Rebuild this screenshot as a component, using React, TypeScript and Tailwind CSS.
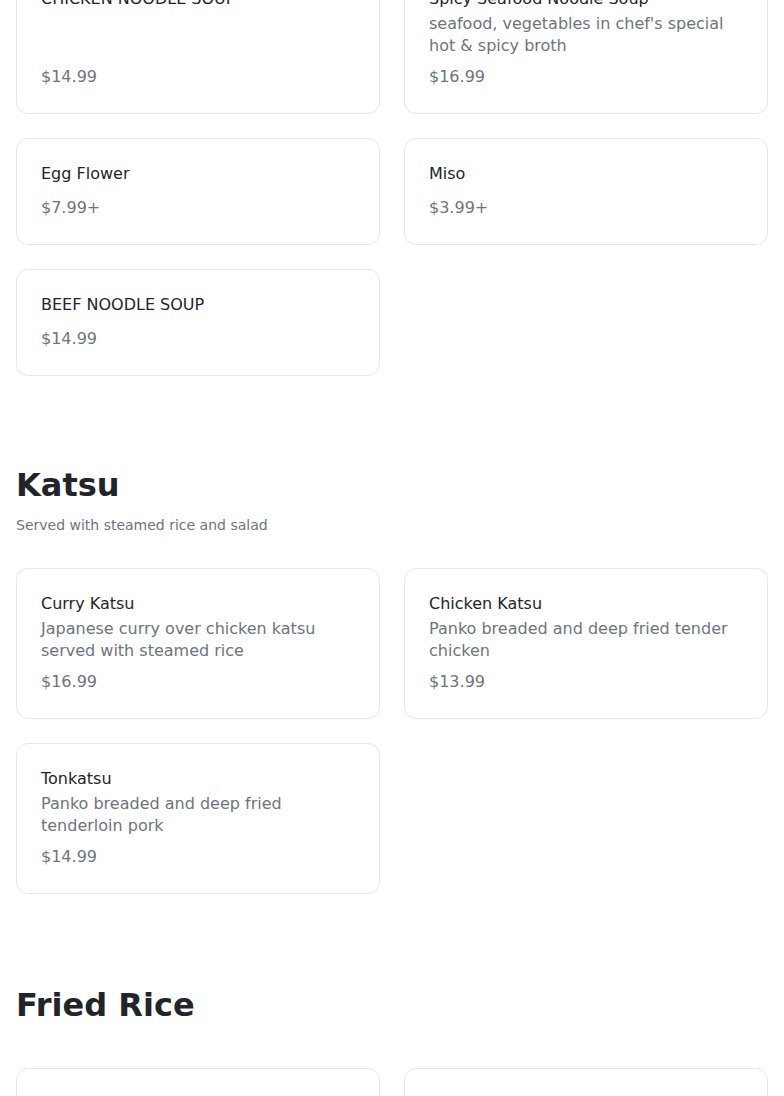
import React from "react";

type Item = { name: string; desc?: string; price: string };

const Card = ({ item }: { item: Item }) => (
  <div className="flex flex-col rounded-xl border border-[#e5e7eb] bg-white px-6 pt-[23px] pb-6">
    <div className="mb-[2px] text-base leading-6 text-[#212529]">{item.name}</div>
    {item.desc && (
      <div className="text-base leading-[22px] text-[#6c757d]">{item.desc}</div>
    )}
    <div className="mt-auto pt-2 text-base leading-6 text-[#6c757d]">{item.price}</div>
  </div>
);

const Grid = ({ items, className }: { items: Item[]; className?: string }) => (
  <div className={`grid grid-cols-2 gap-6 ${className ?? ""}`}>
    {items.map((it) => (
      <Card key={it.name} item={it} />
    ))}
  </div>
);

export default function App() {
  const soup: Item[] = [
    { name: "CHICKEN NOODLE SOUP", price: "$14.99" },
    {
      name: "Spicy Seafood Noodle Soup",
      desc: "seafood, vegetables in chef's special hot & spicy broth",
      price: "$16.99",
    },
    { name: "Egg Flower", price: "$7.99+" },
    { name: "Miso", price: "$3.99+" },
    { name: "BEEF NOODLE SOUP", price: "$14.99" },
  ];
  const katsu: Item[] = [
    {
      name: "Curry Katsu",
      desc: "Japanese curry over chicken katsu served with steamed rice",
      price: "$16.99",
    },
    {
      name: "Chicken Katsu",
      desc: "Panko breaded and deep fried tender chicken",
      price: "$13.99",
    },
    {
      name: "Tonkatsu",
      desc: "Panko breaded and deep fried tenderloin pork",
      price: "$14.99",
    },
  ];
  const friedRice: Item[] = [
    { name: "Chicken Fried Rice", price: "$12.99" },
    { name: "Beef Fried Rice", price: "$13.99" },
  ];
  return (
    <div
      className="h-[1096px] overflow-hidden bg-white px-4"
      style={{ fontFamily: '"DejaVu Sans", sans-serif' }}
    >
      <Grid items={soup} className="-mt-[37px]" />

      <section className="mt-[89px]">
        <h2 className="text-[32px] font-bold leading-10 text-[#212529]">Katsu</h2>
        <p className="mt-[10px] text-sm leading-5 text-[#6c757d]">
          Served with steamed rice and salad
        </p>
        <Grid items={katsu} className="mt-[33px]" />
      </section>

      <section className="mt-[91px]">
        <h2 className="text-[32px] font-bold leading-10 text-[#212529]">Fried Rice</h2>
        <Grid items={friedRice} className="mt-[43px]" />
      </section>
    </div>
  );
}
